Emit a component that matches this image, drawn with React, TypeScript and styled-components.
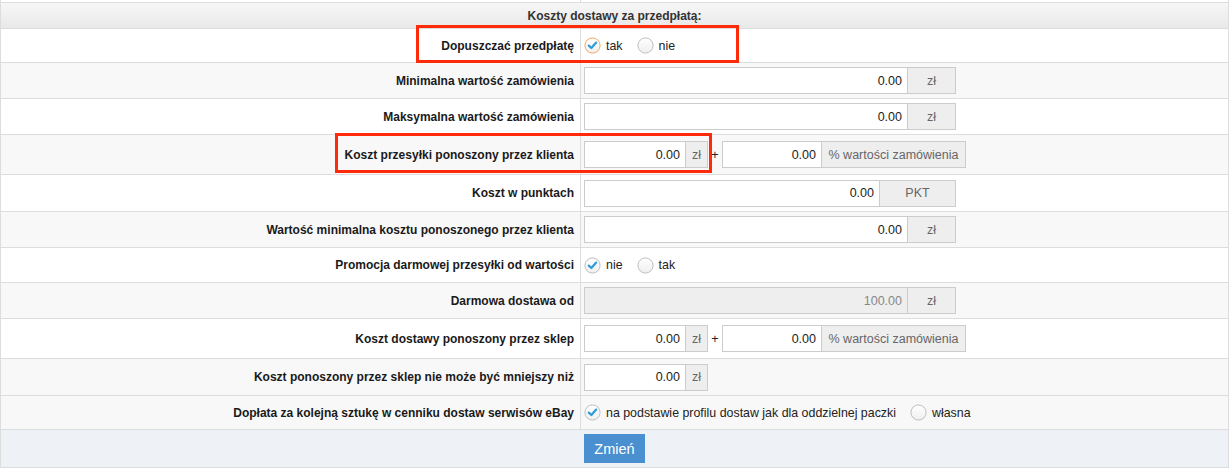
import * as React from 'react'
import styled, { createGlobalStyle } from 'styled-components'

const GlobalStyle = createGlobalStyle`
  body {
    margin: 0;
    background: #fff;
    font-family: 'Liberation Sans', Arial, sans-serif;
    color: #222;
  }
`

const Page = styled.div`
  position: relative;
  width: 1229px;
  box-sizing: border-box;
  border-left: 1px solid #ddd;
  border-right: 1px solid #ddd;
`

const TopStrip = styled.div`
  display: grid;
  grid-template-columns: 580px 1fr;
  height: 3px;
  box-sizing: border-box;
  border-bottom: 1px solid #ddd;

  & > div:first-child {
    border-right: 1px solid #ddd;
  }
`

const Header = styled.div`
  height: 26px;
  box-sizing: border-box;
  border-bottom: 1px solid #ddd;
  background: linear-gradient(to bottom, #f6f6f6 0%, #e9e9e9 100%);
  display: flex;
  align-items: center;
  justify-content: center;
  font-size: 12px;
  font-weight: bold;
  color: #333;
`

interface RowProps {
  $h: number
  $shade?: boolean
}

const Row = styled.div<RowProps>`
  display: grid;
  grid-template-columns: 580px 1fr;
  height: ${(p) => p.$h}px;
  box-sizing: border-box;
  border-bottom: 1px solid #ddd;
  background: ${(p) => (p.$shade ? '#f8f8f8' : '#fff')};
`

const Label = styled.div`
  display: flex;
  align-items: center;
  justify-content: flex-end;
  padding-right: 6px;
  border-right: 1px solid #ddd;
  font-size: 12px;
  font-weight: bold;
  color: #1a1a1a;
  white-space: nowrap;
`

const Value = styled.div`
  display: flex;
  align-items: center;
  padding-left: 3px;
  font-size: 12px;
  color: #222;
`

const Group = styled.div`
  display: inline-flex;
  height: 27px;
`

interface FieldProps {
  $w: number
  $disabled?: boolean
}

const Field = styled.div<FieldProps>`
  width: ${(p) => p.$w}px;
  box-sizing: border-box;
  border: 1px solid #ccc;
  background: ${(p) => (p.$disabled ? '#eee' : '#fff')};
  color: ${(p) => (p.$disabled ? '#888' : '#222')};
  display: flex;
  align-items: center;
  justify-content: flex-end;
  padding-right: 5px;
  font-size: 12.5px;
`

interface AddonProps {
  $w: number
}

const Addon = styled.div<AddonProps>`
  width: ${(p) => p.$w}px;
  box-sizing: border-box;
  border: 1px solid #ccc;
  border-left: none;
  background: #eee;
  color: #666;
  display: flex;
  align-items: center;
  justify-content: center;
  font-size: 12.5px;
  white-space: nowrap;
`

const Plus = styled.span`
  width: 14px;
  text-align: center;
  font-size: 12.5px;
  color: #222;
`

const RadioSet = styled.div`
  display: flex;
  align-items: center;
  gap: 14px;
`

const Option = styled.label`
  display: flex;
  align-items: center;
  gap: 5px;
  font-size: 12.4px;
  color: #222;
`

interface RadioProps {
  checked?: boolean
  focus?: boolean
}

const Radio: React.FC<RadioProps> = ({ checked, focus }) => (
  <svg width="17" height="17" viewBox="0 0 17 17">
    <defs>
      <linearGradient id="rg" x1="0" y1="0" x2="0" y2="1">
        <stop offset="0" stopColor="#ffffff" />
        <stop offset="1" stopColor="#efefef" />
      </linearGradient>
    </defs>
    <circle
      cx="8.5"
      cy="8.5"
      r="7.6"
      fill="url(#rg)"
      stroke={focus ? '#f2a55a' : '#bdbdbd'}
      strokeWidth="1"
    />
    {checked && (
      <path
        d="M4.8 8.6 L7.4 11 L12.2 5.6"
        fill="none"
        stroke="#2f9bd8"
        strokeWidth="2.2"
        strokeLinecap="round"
        strokeLinejoin="round"
      />
    )}
  </svg>
)

const Footer = styled.div`
  display: grid;
  grid-template-columns: 580px 1fr;
  height: 38px;
  box-sizing: border-box;
  border-bottom: 1px solid #ddd;
  background: #eef1f6;
  align-items: center;
`

const Button = styled.button`
  grid-column: 2;
  justify-self: start;
  margin-left: 3px;
  width: 61px;
  height: 29px;
  border: none;
  background: #4a8fcf;
  color: #fff;
  font-family: 'Liberation Sans', Arial, sans-serif;
  font-size: 14.5px;
  padding: 0;
`

interface MarkProps {
  $x: number
  $y: number
  $w: number
  $h: number
}

const Mark = styled.div<MarkProps>`
  position: absolute;
  left: ${(p) => p.$x}px;
  top: ${(p) => p.$y}px;
  width: ${(p) => p.$w}px;
  height: ${(p) => p.$h}px;
  box-sizing: border-box;
  border: 3px solid #ff2a0a;
  pointer-events: none;
`

export default function App() {
  return (
    <>
      <GlobalStyle />
      <Page>
        <TopStrip>
          <div />
          <div />
        </TopStrip>
        <Header>Koszty dostawy za przedpłatą:</Header>

        <Row $h={34}>
          <Label>Dopuszczać przedpłatę</Label>
          <Value>
            <RadioSet>
              <Option>
                <Radio checked focus />
                tak
              </Option>
              <Option>
                <Radio />
                nie
              </Option>
            </RadioSet>
          </Value>
        </Row>

        <Row $h={36} $shade>
          <Label>Minimalna wartość zamówienia</Label>
          <Value>
            <Group>
              <Field $w={324}>0.00</Field>
              <Addon $w={48}>zł</Addon>
            </Group>
          </Value>
        </Row>

        <Row $h={36}>
          <Label>Maksymalna wartość zamówienia</Label>
          <Value>
            <Group>
              <Field $w={324}>0.00</Field>
              <Addon $w={48}>zł</Addon>
            </Group>
          </Value>
        </Row>

        <Row $h={40} $shade>
          <Label>Koszt przesyłki ponoszony przez klienta</Label>
          <Value>
            <Group>
              <Field $w={102}>0.00</Field>
              <Addon $w={22}>zł</Addon>
            </Group>
            <Plus>+</Plus>
            <Group>
              <Field $w={100}>0.00</Field>
              <Addon $w={144}>% wartości zamówienia</Addon>
            </Group>
          </Value>
        </Row>

        <Row $h={37}>
          <Label>Koszt w punktach</Label>
          <Value>
            <Group>
              <Field $w={296}>0.00</Field>
              <Addon $w={76}>PKT</Addon>
            </Group>
          </Value>
        </Row>

        <Row $h={36} $shade>
          <Label>Wartość minimalna kosztu ponoszonego przez klienta</Label>
          <Value>
            <Group>
              <Field $w={324}>0.00</Field>
              <Addon $w={48}>zł</Addon>
            </Group>
          </Value>
        </Row>

        <Row $h={35}>
          <Label>Promocja darmowej przesyłki od wartości</Label>
          <Value>
            <RadioSet>
              <Option>
                <Radio checked />
                nie
              </Option>
              <Option>
                <Radio />
                tak
              </Option>
            </RadioSet>
          </Value>
        </Row>

        <Row $h={36} $shade>
          <Label>Darmowa dostawa od</Label>
          <Value>
            <Group>
              <Field $w={324} $disabled>
                100.00
              </Field>
              <Addon $w={48}>zł</Addon>
            </Group>
          </Value>
        </Row>

        <Row $h={40}>
          <Label>Koszt dostawy ponoszony przez sklep</Label>
          <Value>
            <Group>
              <Field $w={102}>0.00</Field>
              <Addon $w={22}>zł</Addon>
            </Group>
            <Plus>+</Plus>
            <Group>
              <Field $w={100}>0.00</Field>
              <Addon $w={144}>% wartości zamówienia</Addon>
            </Group>
          </Value>
        </Row>

        <Row $h={37} $shade>
          <Label>Koszt ponoszony przez sklep nie może być mniejszy niż</Label>
          <Value>
            <Group>
              <Field $w={102}>0.00</Field>
              <Addon $w={22}>zł</Addon>
            </Group>
          </Value>
        </Row>

        <Row $h={34} $shade>
          <Label>Dopłata za kolejną sztukę w cenniku dostaw serwisów eBay</Label>
          <Value>
            <RadioSet>
              <Option>
                <Radio checked />
                na podstawie profilu dostaw jak dla oddzielnej paczki
              </Option>
              <Option>
                <Radio />
                własna
              </Option>
            </RadioSet>
          </Value>
        </Row>

        <Footer>
          <Button>Zmień</Button>
        </Footer>

        <Mark $x={415} $y={25} $w={323} $h={38} />
        <Mark $x={334} $y={133} $w={377} $h={40} />
      </Page>
    </>
  )
}
